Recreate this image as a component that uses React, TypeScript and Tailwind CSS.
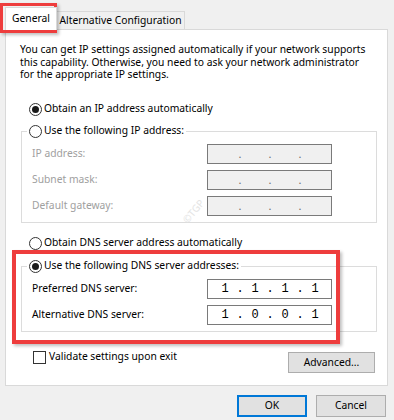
import { Fragment } from 'react';

function Radio({ checked }: { checked?: boolean }) {
    return (
        <span className="flex h-[13px] w-[13px] shrink-0 items-center justify-center rounded-full border border-[#333333] bg-white">
            {checked && <span className="h-[7px] w-[7px] rounded-full bg-[#1a1a1a]" />}
        </span>
    );
}

function IpField({ octets }: { octets?: string[] }) {
    const cells = octets ?? ['', '', '', ''];
    return (
        <div
            className={
                octets
                    ? "flex h-[20px] w-[125px] items-center border border-[#7a7a7a] bg-white pl-[2px] font-['Liberation_Mono',monospace] text-[12px] text-black"
                    : 'flex h-[20px] w-[125px] items-center border border-[#7a7a7a] bg-[#f0f0f0] pl-[2px] text-[11px] text-[#6d6d6d]'
            }
        >
            {cells.map((o, i) => (
                <Fragment key={i}>
                    {i > 0 && <span className="flex w-0 justify-center">.</span>}
                    <span className="w-[30px] text-center">{o}</span>
                </Fragment>
            ))}
        </div>
    );
}

function Row({ label, disabled, octets }: { label: string; disabled?: boolean; octets?: string[] }) {
    return (
        <div className="flex h-[20px] items-center pl-[10px]">
            <span className={disabled ? 'w-[175px] text-[#a0a0a0]' : 'w-[175px] text-black'}>{label}</span>
            <IpField octets={octets} />
        </div>
    );
}

function Group({ title, checked, children, className }: { title: string; checked?: boolean; children: React.ReactNode; className: string }) {
    return (
        <fieldset className={`ml-[15px] w-[356px] border border-[#dcdcdc] pb-[6px] ${className}`}>
            <legend className="ml-[5px] flex h-[14px] items-center gap-[2px] px-[2px]">
                <Radio checked={checked} />
                <span>{title}</span>
            </legend>
            <div className="mt-[6px] flex flex-col gap-[6px]">{children}</div>
        </fieldset>
    );
}

export default function App() {
    return (
        <div className="relative h-[420px] w-[394px] overflow-hidden whitespace-nowrap bg-[#f0f0f0] font-['Noto_Sans',sans-serif] text-[10.3px] text-black">
            {/* tabs */}
            <div className="ml-[5px] mt-[7px] flex h-[22px] items-start">
                <div className="relative z-10 flex h-[23px] w-[52px] items-center justify-center border border-b-0 border-[#d9d9d9] bg-white">
                    General
                </div>
                <div className="mt-[4px] flex h-[18px] w-[128px] items-center justify-center border border-b-0 border-l-0 border-[#d9d9d9] bg-[#f0f0f0]">
                    Alternative Configuration
                </div>
            </div>

            {/* panel */}
            <div className="ml-[5px] mr-[6px] h-[357px] border border-[#d9d9d9] bg-white">
                <p className="ml-[14px] mt-[13px] h-[37px] leading-[12.5px]">
                    You can get IP settings assigned automatically if your network supports
                    <br />
                    this capability. Otherwise, you need to ask your network administrator
                    <br />
                    for the appropriate IP settings.
                </p>

                <div className="ml-[23px] mt-[22px] flex h-[14px] items-center gap-[2px]">
                    <Radio checked />
                    <span>Obtain an IP address automatically</span>
                </div>

                <Group title="Use the following IP address:" className="mt-[8px]">
                    <Row label="IP address:" disabled />
                    <Row label="Subnet mask:" disabled />
                    <Row label="Default gateway:" disabled />
                </Group>

                <div className="ml-[23px] mt-[13px] flex h-[14px] items-center gap-[2px]">
                    <Radio />
                    <span>Obtain DNS server address automatically</span>
                </div>

                <Group title="Use the following DNS server addresses:" checked className="mt-[9px]">
                    <Row label="Preferred DNS server:" octets={['1', '1', '1', '1']} />
                    <Row label="Alternative DNS server:" octets={['1', '0', '0', '1']} />
                </Group>

                <div className="mt-[18px] flex items-start justify-between">
                    <label className="ml-[27px] flex h-[14px] items-center gap-[3px]">
                        <span className="h-[13px] w-[13px] border border-[#333333] bg-white" />
                        <span>Validate settings upon exit</span>
                    </label>
                    <button className="mr-[12px] mt-[2px] h-[21px] w-[87px] border border-[#adadad] bg-[#e1e1e1]">
                        Advanced...
                    </button>
                </div>
            </div>

            {/* dialog buttons */}
            <div className="mt-[9px] flex justify-end gap-[9px] pr-[8px]">
                <button className="h-[22px] w-[70px] border-2 border-[#0078d7] bg-[#e1e1e1]">OK</button>
                <button className="h-[22px] w-[70px] border border-[#adadad] bg-[#e1e1e1]">Cancel</button>
            </div>

            {/* annotations */}
            <div className="absolute left-0 top-[3px] h-[30px] w-[57px] border-[3px] border-[#ee3d3d] shadow-[2px_2px_3px_rgba(0,0,0,0.25)]" />
            <div className="absolute left-[12px] top-[250px] h-[94px] w-[328px] border-[4px] border-[#ee3d3d] shadow-[2px_2px_3px_rgba(0,0,0,0.25)]" />
            <span className="absolute left-[180px] top-[204px] -rotate-[50deg] text-[10px] text-[#e4e4e4]">©TGP</span>
        </div>
    );
}
